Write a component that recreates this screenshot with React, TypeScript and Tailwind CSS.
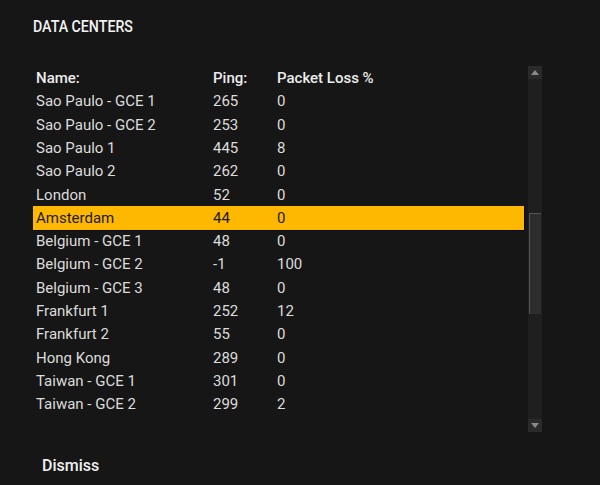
import React from 'react';

interface Center {
  name: string;
  ping: number;
  loss: number;
}

const centers: Center[] = [
  { name: 'Sao Paulo - GCE 1', ping: 265, loss: 0 },
  { name: 'Sao Paulo - GCE 2', ping: 253, loss: 0 },
  { name: 'Sao Paulo 1', ping: 445, loss: 8 },
  { name: 'Sao Paulo 2', ping: 262, loss: 0 },
  { name: 'London', ping: 52, loss: 0 },
  { name: 'Amsterdam', ping: 44, loss: 0 },
  { name: 'Belgium - GCE 1', ping: 48, loss: 0 },
  { name: 'Belgium - GCE 2', ping: -1, loss: 100 },
  { name: 'Belgium - GCE 3', ping: 48, loss: 0 },
  { name: 'Frankfurt 1', ping: 252, loss: 12 },
  { name: 'Frankfurt 2', ping: 55, loss: 0 },
  { name: 'Hong Kong', ping: 289, loss: 0 },
  { name: 'Taiwan - GCE 1', ping: 301, loss: 0 },
  { name: 'Taiwan - GCE 2', ping: 299, loss: 2 },
];

const selected = 'Amsterdam';

function Row({ c }: { c: Center }) {
  const active = c.name === selected;
  return (
    <div
      className={
        active
          ? 'flex h-[23.3px] items-center bg-[#ffb800] pl-[3px] text-[#1a1a1a] shadow-[1px_1px_0_#0a0a0a]'
          : 'flex h-[23.3px] items-center pl-[3px] text-[#dcdcdc]'
      }
    >
      <span className="w-[177px]">{c.name}</span>
      <span className="w-[64px]">{c.ping}</span>
      <span>{c.loss}</span>
    </div>
  );
}

export default function App() {
  return (
    <div
      className="h-[485px] w-[600px] overflow-hidden bg-[#161616] pl-[33px]"
      style={{ fontFamily: 'Roboto, "Liberation Sans", sans-serif' }}
    >
      <h1 className="origin-left scale-x-[0.86] pt-[15px] text-[16.5px] font-medium leading-[24px] text-[#f2f2f2]">
        DATA CENTERS
      </h1>

      <div className="mt-[27px] flex gap-[4px]">
        <div className="w-[491px] text-[15px]">
          <div className="flex h-[24px] items-center pl-[3px] font-medium text-[#ececec]">
            <span className="w-[177px]">Name:</span>
            <span className="w-[64px]">Ping:</span>
            <span>Packet Loss %</span>
          </div>
          <div>
            {centers.map((c) => (
              <Row key={c.name} c={c} />
            ))}
          </div>
        </div>

        {/* scrollbar */}
        <div className="flex h-[366px] w-[14px] flex-col bg-[#1f1f1f]">
          <div className="flex h-[13px] items-center justify-center bg-[#2a2a2a]">
            <svg width="8" height="5" viewBox="0 0 8 5">
              <path d="M4 0 L8 5 L0 5 Z" fill="#8a8a8a" />
            </svg>
          </div>
          <div className="flex-1 px-[1px] pt-[134px]">
            <div className="h-[101px] border-l border-t border-[#555] bg-[#2d2d2d]" />
          </div>
          <div className="flex h-[13px] items-center justify-center bg-[#2a2a2a]">
            <svg width="8" height="5" viewBox="0 0 8 5">
              <path d="M0 0 L8 0 L4 5 Z" fill="#8a8a8a" />
            </svg>
          </div>
        </div>
      </div>

      <div className="mt-[22px] pl-[9px] text-[16px] font-medium text-[#f0f0f0]">Dismiss</div>
    </div>
  );
}
